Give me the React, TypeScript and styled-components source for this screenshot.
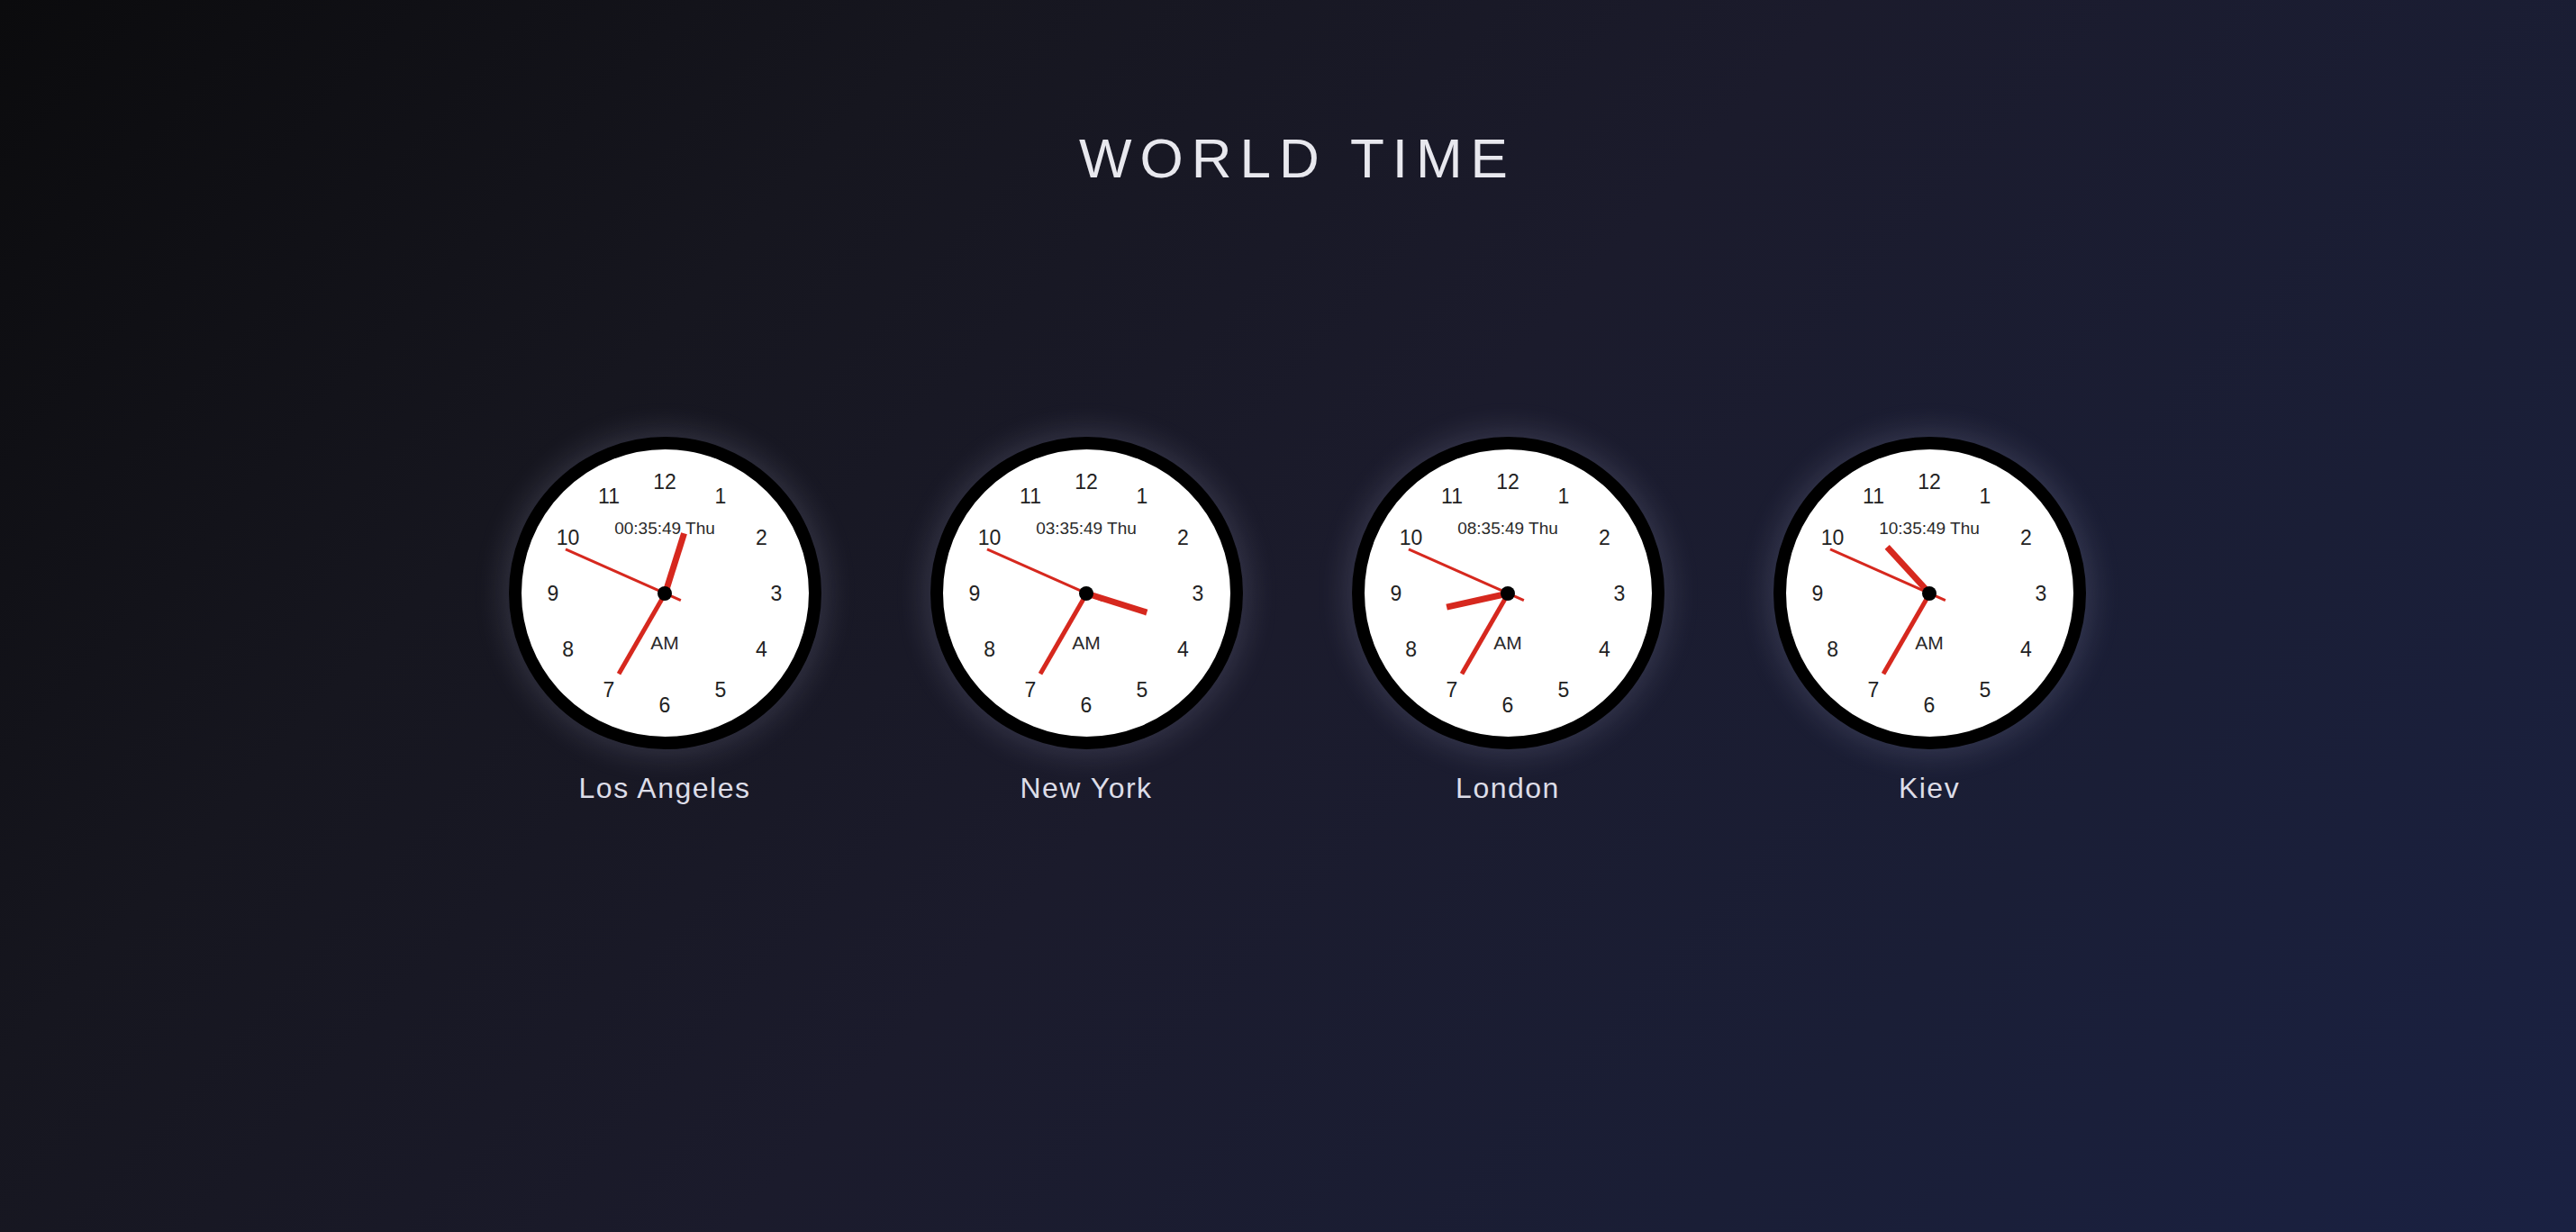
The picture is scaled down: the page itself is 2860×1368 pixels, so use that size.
import styled, { createGlobalStyle } from 'styled-components';

type Zone = {
  city: string;
  h: number;
  m: number;
  s: number;
  day: string;
};

const zones: Zone[] = [
  { city: 'Los Angeles', h: 0, m: 35, s: 49, day: 'Thu' },
  { city: 'New York', h: 3, m: 35, s: 49, day: 'Thu' },
  { city: 'London', h: 8, m: 35, s: 49, day: 'Thu' },
  { city: 'Kiev', h: 10, m: 35, s: 49, day: 'Thu' },
];

const DIAL_SIZE = 347;
const BORDER = 14;
const FACE = DIAL_SIZE - BORDER * 2;
const NUMBER_RADIUS = 124;

const pad = (n: number) => String(n).padStart(2, '0');

const GlobalStyle = createGlobalStyle`
  html, body {
    margin: 0;
    padding: 0;
  }

  body {
    font-family: "Liberation Sans", Arial, sans-serif;
    background: #0c0c0e;
  }
`;

const Page = styled.main`
  min-height: 100vh;
  box-sizing: border-box;
  display: flex;
  flex-direction: column;
  align-items: center;
  padding-left: 12px;
  background: linear-gradient(
    132deg,
    #0b0b0d 0%,
    #16161f 26%,
    #1b1b2c 50%,
    #1a1e36 76%,
    #1a2142 100%
  );
`;

const Title = styled.h1`
  margin: 140px 0 0;
  padding-left: 9px;
  font-size: 62px;
  font-weight: 400;
  letter-spacing: 9px;
  line-height: 71px;
  color: #e8e8ee;
`;

const ClockRow = styled.section`
  display: flex;
  gap: 121px;
  margin-top: 274px;
  padding-left: 8px;
`;

const ClockCard = styled.div`
  display: flex;
  flex-direction: column;
  align-items: center;
  width: ${DIAL_SIZE}px;
`;

// white face inside a thick black rim; the two text lines sit in its middle
const Dial = styled.div`
  position: relative;
  width: ${DIAL_SIZE}px;
  height: ${DIAL_SIZE}px;
  box-sizing: border-box;
  border: ${BORDER}px solid #000;
  border-radius: 50%;
  background: #fff;
  box-shadow: 0 0 34px 6px rgba(205, 205, 240, 0.16);
  display: flex;
  flex-direction: column;
  align-items: center;
  justify-content: center;
  gap: 107px;
  padding-bottom: 16px;
`;

const Numeral = styled.span`
  position: absolute;
  transform: translate(-50%, -50%);
  font-size: 23px;
  line-height: 1;
  color: #222;
`;

const Caption = styled.span<{ $size: number }>`
  font-size: ${(p) => p.$size}px;
  line-height: 1;
  white-space: nowrap;
  color: #2a2a2a;
`;

const Hand = styled.div<{ $len: number; $width: number; $tail?: number; $angle: number }>`
  position: absolute;
  left: calc(50% - ${(p) => p.$width / 2}px);
  bottom: calc(50% - ${(p) => p.$tail ?? 0}px);
  width: ${(p) => p.$width}px;
  height: ${(p) => p.$len + (p.$tail ?? 0)}px;
  background: #d6281e;
  transform-origin: 50% calc(100% - ${(p) => p.$tail ?? 0}px);
  transform: rotate(${(p) => p.$angle}deg);
`;

const Pivot = styled.div`
  position: absolute;
  left: 50%;
  top: 50%;
  width: 16px;
  height: 16px;
  margin: -8px 0 0 -8px;
  border-radius: 50%;
  background: #000;
`;

const CityName = styled.div`
  margin-top: 25px;
  font-size: 32px;
  letter-spacing: 1.5px;
  color: #dddde8;
`;

const Clock = ({ zone }: { zone: Zone }) => {
  const { h, m, s, day } = zone;
  const hourAngle = (h % 12) * 30 + m * 0.5;
  const minuteAngle = m * 6;
  const secondAngle = s * 6;

  return (
    <Dial>
      {Array.from({ length: 12 }, (_, i) => {
        const n = i + 1;
        const a = (n * 30 * Math.PI) / 180;
        const x = FACE / 2 + Math.sin(a) * NUMBER_RADIUS;
        const y = FACE / 2 - Math.cos(a) * NUMBER_RADIUS;
        return (
          <Numeral key={n} style={{ left: x, top: y }}>
            {n}
          </Numeral>
        );
      })}
      <Caption $size={19}>{`${pad(h)}:${pad(m)}:${pad(s)} ${day}`}</Caption>
      <Caption $size={21}>{h < 12 ? 'AM' : 'PM'}</Caption>
      <Hand $len={70} $width={7} $angle={hourAngle} />
      <Hand $len={103} $width={5} $angle={minuteAngle} />
      <Hand $len={121} $width={3} $tail={19} $angle={secondAngle} />
      <Pivot />
    </Dial>
  );
};

const App = () => {
  return (
    <>
      <GlobalStyle />
      <Page>
        <Title>WORLD TIME</Title>
        <ClockRow>
          {zones.map((zone) => (
            <ClockCard key={zone.city}>
              <Clock zone={zone} />
              <CityName>{zone.city}</CityName>
            </ClockCard>
          ))}
        </ClockRow>
      </Page>
    </>
  );
};

export default App;
